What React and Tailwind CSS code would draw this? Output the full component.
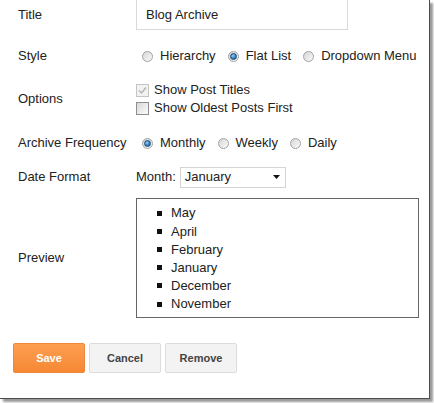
import React from "react";

const font = { fontFamily: '"Liberation Sans", Arial, sans-serif' };

function Radio({ checked, label }) {
  return (
    <label className="flex items-center">
      <span className="w-[11px] h-[11px] rounded-full border border-[#a2a2a2] bg-gradient-to-br from-[#d6d6d6] to-[#fafafa] flex items-center justify-center">
        {checked && (
          <span className="w-[7px] h-[7px] rounded-full border border-[#1d4a73] bg-[radial-gradient(circle_at_40%_35%,#8fd0ff,#2a7cc4_60%,#184a78)]" />
        )}
      </span>
      <span className="ml-[7px]">{label}</span>
    </label>
  );
}

function Check({ checked, disabled, label }) {
  return (
    <label className="flex items-center h-[18px]">
      <span
        className={
          disabled
            ? "w-[13px] h-[13px] border border-[#c4c4c4] bg-[#f2f2f2] flex items-center justify-center"
            : "w-[13px] h-[13px] border border-[#8e8e8e] bg-gradient-to-br from-[#d9d9d9] to-[#fbfbfb]"
        }
      >
        {checked && (
          <svg width="9" height="9" viewBox="0 0 9 9">
            <path d="M1 4.5 L3.5 7 L8 1.5" fill="none" stroke="#b3b3b3" strokeWidth="1.4" />
          </svg>
        )}
      </span>
      <span className="ml-[5px]">{label}</span>
    </label>
  );
}

function Label({ children }) {
  return <div className="w-[136px] shrink-0 pl-[18px]">{children}</div>;
}

export default function App() {
  const months = ["May", "April", "February", "January", "December", "November"];

  return (
    <div className="w-[434px] h-[403px] bg-white overflow-hidden" style={font}>
      <div className="w-[430px] h-[399px] bg-white border-r border-b border-[#4d4d4d] shadow-[3px_3px_2px_rgba(0,0,0,0.4)] text-[13px] text-[#222]">
        {/* Title */}
        <div className="flex items-center h-[30px]">
          <Label>Title</Label>
          <div className="w-[212px] h-[31px] -mt-px border border-[#d9d9d9] flex items-center pl-[9px] text-[#222]">
            Blog Archive
          </div>
        </div>

        {/* Style */}
        <div className="flex items-center h-[20px] mt-[16px]">
          <Label>Style</Label>
          <div className="flex items-center gap-[12px] ml-[6px]">
            <Radio label="Hierarchy" />
            <Radio checked label="Flat List" />
            <Radio label="Dropdown Menu" />
          </div>
        </div>

        {/* Options */}
        <div className="flex items-center h-[36px] mt-[15px]">
          <Label>Options</Label>
          <div className="flex flex-col">
            <Check checked disabled label="Show Post Titles" />
            <Check label="Show Oldest Posts First" />
          </div>
        </div>

        {/* Archive Frequency */}
        <div className="flex items-center h-[20px] mt-[16px]">
          <Label>Archive Frequency</Label>
          <div className="flex items-center gap-[12px] ml-[6px]">
            <Radio checked label="Monthly" />
            <Radio label="Weekly" />
            <Radio label="Daily" />
          </div>
        </div>

        {/* Date Format */}
        <div className="flex items-center h-[20px] mt-[14px]">
          <Label>Date Format</Label>
          <span>Month:</span>
          <div className="ml-[4px] w-[106px] h-[21px] border border-[#d4d4d4] flex items-center justify-between pl-[4px] pr-[5px]">
            <span>January</span>
            <svg width="7" height="4" viewBox="0 0 7 4">
              <path d="M0 0 H7 L3.5 4 Z" fill="#111" />
            </svg>
          </div>
        </div>

        {/* Preview */}
        <div className="flex items-center mt-[11px]">
          <Label>Preview</Label>
          <div className="w-[283px] h-[120px] border border-[#666] pt-[5px]">
            {months.map((m) => (
              <div key={m} className="flex items-center h-[18.2px]">
                <span className="ml-[20px] w-[5px] h-[5px] bg-[#111]" />
                <span className="ml-[9px]">{m}</span>
              </div>
            ))}
          </div>
        </div>

        {/* Buttons */}
        <div className="flex gap-[4px] pl-[13px] mt-[25px] text-[11px] font-bold">
          <button className="w-[72px] h-[30px] rounded-[2px] border border-[#f0863a] bg-gradient-to-b from-[#fd9f50] to-[#f58833] text-white">
            Save
          </button>
          <button className="w-[72px] h-[30px] rounded-[2px] border border-[#dcdcdc] bg-[#f3f3f3] text-[#444]">
            Cancel
          </button>
          <button className="w-[72px] h-[30px] rounded-[2px] border border-[#dcdcdc] bg-[#f3f3f3] text-[#444]">
            Remove
          </button>
        </div>
      </div>
    </div>
  );
}
